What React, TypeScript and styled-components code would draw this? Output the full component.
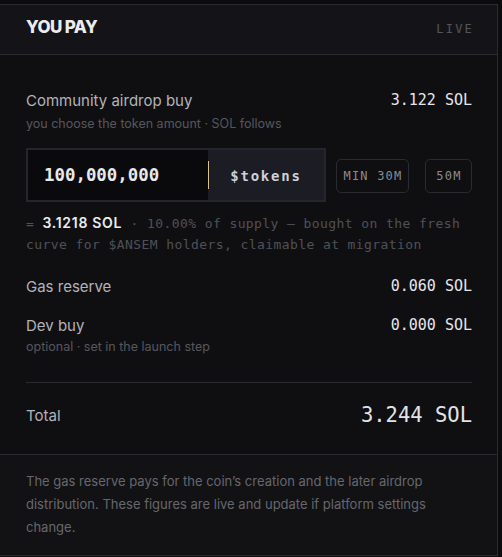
import styled, { createGlobalStyle } from "styled-components";

const GlobalStyle = createGlobalStyle`
  html, body {
    margin: 0;
    padding: 0;
    background: #0c0c0f;
  }
  body {
    font-family: Inter, "Noto Sans", sans-serif;
    -webkit-font-smoothing: antialiased;
  }
  *, *::before, *::after {
    box-sizing: border-box;
  }
`;

const MONO = `"DejaVu Sans Mono", "Liberation Mono", monospace`;

const Card = styled.section`
  width: 499px;
  height: 552px;
  margin: 4px 0 0 -1px;
  border: 1px solid #2a2a31;
  background: #0f0f12;
  display: flex;
  flex-direction: column;
`;

const Header = styled.header`
  flex: none;
  height: 50px;
  padding: 0 25px 5px 26px;
  display: flex;
  align-items: center;
  justify-content: space-between;
  background: #141418;
  border-bottom: 1px solid #2a2a31;
`;

const Title = styled.h2`
  margin: 0;
  font-size: 17px;
  font-weight: 800;
  letter-spacing: -0.6px;
  color: #ececef;
`;

const Live = styled.span`
  font-family: ${MONO};
  font-size: 12px;
  letter-spacing: 2.2px;
  color: #54555c;
  margin-right: -2px;
  margin-top: 4px;
`;

const Body = styled.div`
  flex: 1;
  padding: 35px 25px 0 26px;
  display: flex;
  flex-direction: column;
`;

const Row = styled.div<{ $gap?: number }>`
  display: flex;
  justify-content: space-between;
  align-items: center;
  margin-top: ${(p) => p.$gap ?? 0}px;
  height: 20px;
`;

const Label = styled.span`
  font-size: 15px;
  color: #b3b3b8;
`;

const Value = styled.span`
  font-family: ${MONO};
  font-size: 15px;
  color: #e6e6e9;
`;

const Sub = styled.div<{ $gap?: number }>`
  font-size: 12.5px;
  line-height: 18px;
  margin-top: ${(p) => p.$gap ?? 5}px;
  color: #56575d;
`;

const Controls = styled.div`
  display: flex;
  align-items: center;
  margin-top: 15px;
`;

const InputGroup = styled.div`
  width: 300px;
  height: 54px;
  border: 2px solid #25262d;
  display: flex;
  margin-right: 10px;
`;

const AmountInput = styled.input`
  width: 180px;
  border: none;
  outline: none;
  background: #0a0a0d;
  padding: 0 0 0 16px;
  font-family: ${MONO};
  font-weight: 700;
  font-size: 17.4px;
  color: #e9e9ec;
`;

const Suffix = styled.div`
  position: relative;
  flex: 1;
  display: flex;
  align-items: center;
  justify-content: center;
  background: #1c1d24;
  font-family: ${MONO};
  font-weight: 700;
  font-size: 14px;
  letter-spacing: 1.8px;
  color: #cfd0d6;
  padding-top: 1px;

  &::before {
    content: "";
    position: absolute;
    left: 0;
    top: 11px;
    bottom: 11px;
    width: 1px;
    background: #d9c48e;
  }
`;

const Chip = styled.button<{ $w: number }>`
  width: ${(p) => p.$w}px;
  height: 34px;
  padding: 0 0 0 1px;
  border: 1px solid #2a2b31;
  border-radius: 5px;
  background: transparent;
  font-family: ${MONO};
  font-size: 12px;
  letter-spacing: 1.2px;
  white-space: nowrap;
  color: #8a8b91;
  margin-top: 2px;
  & + & {
    margin-left: auto;
  }
`;

const Note = styled.p`
  margin: 10px 0 0;
  font-family: ${MONO};
  font-size: 13px;
  letter-spacing: 0.42px;
  line-height: 21px;
  color: #505157;

  strong {
    font-family: Inter, "Noto Sans", sans-serif;
    font-size: 14px;
    letter-spacing: 0.7px;
    color: #ececef;
    font-weight: 600;
  }
`;

const Divider = styled.hr`
  border: none;
  border-top: 1px solid #2a2a31;
  margin: 26px 0 0;
`;

const TotalRow = styled.div`
  display: flex;
  justify-content: space-between;
  align-items: center;
  height: 28px;
  margin-top: 18px;
`;

const TotalValue = styled.span`
  font-family: ${MONO};
  font-size: 20.5px;
  color: #e3e3e6;
`;

const Footer = styled.footer`
  flex: none;
  height: 101px;
  border-top: 1px solid #2a2a31;
  background: #121215;
  padding: 15px 40px 0 26px;
  font-size: 13px;
  line-height: 23px;
  color: #66676d;
`;

export default function App() {
  return (
    <>
      <GlobalStyle />
      <Card>
        <Header>
          <Title>YOU PAY</Title>
          <Live>LIVE</Live>
        </Header>
        <Body>
          <Row>
            <Label>Community airdrop buy</Label>
            <Value>3.122 SOL</Value>
          </Row>
          <Sub>you choose the token amount · SOL follows</Sub>
          <Controls>
            <InputGroup>
              <AmountInput defaultValue="100,000,000" />
              <Suffix>$tokens</Suffix>
            </InputGroup>
            <Chip $w={73}>MIN 30M</Chip>
            <Chip $w={47}>50M</Chip>
          </Controls>
          <Note>
            = <strong>3.1218 SOL</strong> · 10.00% of supply — bought on the fresh
            curve for $ANSEM holders, claimable at migration
          </Note>
          <Row $gap={21}>
            <Label>Gas reserve</Label>
            <Value>0.060 SOL</Value>
          </Row>
          <Row $gap={19}>
            <Label>Dev buy</Label>
            <Value>0.000 SOL</Value>
          </Row>
          <Sub $gap={3}>optional · set in the launch step</Sub>
          <Divider />
          <TotalRow>
            <Label>Total</Label>
            <TotalValue>3.244 SOL</TotalValue>
          </TotalRow>
        </Body>
        <Footer>
          The gas reserve pays for the coin’s creation and the later airdrop
          distribution. These figures are live and update if platform settings
          change.
        </Footer>
      </Card>
    </>
  );
}
